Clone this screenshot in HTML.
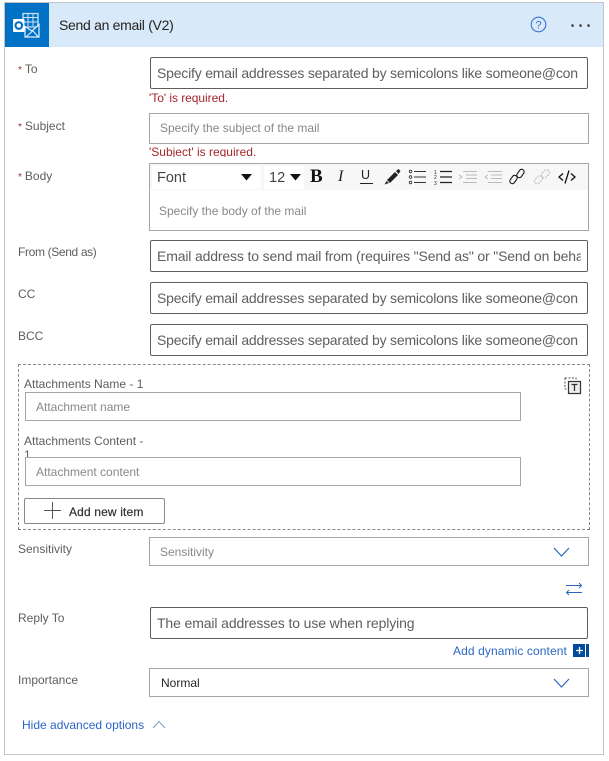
<!DOCTYPE html>
<html><head><meta charset="utf-8">
<style>
html,body{margin:0;padding:0;background:#fff;width:609px;height:761px;overflow:hidden}
body{font-family:"Liberation Sans",sans-serif;position:relative}
.a{position:absolute;box-sizing:border-box}
.t{position:absolute;white-space:nowrap}
.l{font-size:12px;color:#605e5c;line-height:16px}
.r{color:#a4262c;font-size:10px;margin-right:3px}
.d{border:1px solid #605e5c;border-radius:2px;background:#fff;overflow:hidden;white-space:nowrap;color:#605e5c;font-size:14px;line-height:30px;padding-left:6px;padding-right:6px;letter-spacing:-.12px}
.d span{display:block;overflow:hidden}
.d.s{letter-spacing:-.2px}
.g{border:1px solid #a6a6a6;background:#fff;overflow:hidden;white-space:nowrap;color:#8a8886;font-size:12px;line-height:28px;padding-left:10px}
</style></head><body>
<div class="a" style="left:4px;top:2px;width:600px;height:753px;border:1px solid #c4c4c4;background:#fff"></div>
<div class="a" style="left:5px;top:3px;width:598px;height:44px;background:#d8e9f9"></div>
<div class="a" style="left:5px;top:3px;width:44px;height:44px;background:#0072c6"></div>
<svg class="a" style="left:12px;top:12px" width="30" height="27" viewBox="0 0 30 27">
<path d="M11 1.500H26V15H11Z" fill="none" stroke="#cfe4f6" stroke-width="1.300"/><path d="M11 5.500H26M16 1.500V14M21 1.500V14M11 10H26" stroke="#cfe4f6" stroke-width="1"/>
<path d="M13 14.500L20 19L27 12.500V25H13Z" fill="#0072c6" stroke="#e6f1fb" stroke-width="1.200"/><path d="M14 25L20.500 19M26.500 25L21 19" stroke="#e6f1fb" stroke-width="1.100"/>
<rect x="1" y="7" width="11.500" height="13" rx="1" fill="#fff"/><circle cx="6.800" cy="13.500" r="3.300" fill="none" stroke="#0072c6" stroke-width="2.100"/></svg>
<div class="t" style="left:59px;top:16px;font-size:14px;line-height:18px;color:#252423;letter-spacing:-.3px">Send an email (V2)</div>
<svg class="a" style="left:530px;top:16px" width="17" height="17" viewBox="0 0 17 17"><circle cx="8.500" cy="8.500" r="7.300" fill="none" stroke="#3b6fd8" stroke-width="1.100"/><text x="8.500" y="12.500" font-size="11" text-anchor="middle" fill="#3b6fd8" font-family="Liberation Sans">?</text></svg>
<svg class="a" style="left:570px;top:23px" width="22" height="5"><circle cx="2.500" cy="2.500" r="1.300" fill="#333"/><circle cx="10.500" cy="2.500" r="1.300" fill="#333"/><circle cx="18.500" cy="2.500" r="1.300" fill="#333"/></svg>

<div class="t l" style="left:18px;top:61px"><span class="r">*</span>To</div>
<div class="a d s" style="left:150px;top:57px;height:32px;width:438px"><span>Specify email addresses separated by semicolons like someone@con</span></div>
<div class="t" style="left:149px;top:91px;font-size:12px;line-height:15px;color:#a4262c;letter-spacing:-.05px">'To' is required.</div>

<div class="t l" style="left:18px;top:118px"><span class="r">*</span>Subject</div>
<div class="a g" style="left:149px;top:113px;width:440px;height:31px">Specify the subject of the mail</div>
<div class="t" style="left:149px;top:145px;font-size:12px;line-height:15px;color:#a4262c;height:12px;overflow:hidden">'Subject' is required.</div>

<div class="t l" style="left:18px;top:168px"><span class="r">*</span>Body</div>
<div class="a" style="left:149px;top:163px;width:440px;height:68px;border:1px solid #a6a6a6;background:#fff"></div>
<div class="a" style="left:150px;top:164px;width:438px;height:26px;background:#f7f7f7"></div>
<div class="a" style="left:152px;top:166px;width:109px;height:23px;background:#fff"></div>
<div class="a" style="left:264px;top:166px;width:40px;height:23px;background:#fff"></div>
<div class="t" style="left:157px;top:169px;font-size:14.500px;line-height:18px;color:#444">Font</div>
<svg class="a" style="left:241px;top:174px" width="12" height="7"><path d="M0 0H11L5.500 6.500Z" fill="#111"/></svg>
<div class="t" style="left:269px;top:169px;font-size:14.500px;line-height:18px;color:#444">12</div>
<svg class="a" style="left:290px;top:174px" width="12" height="7"><path d="M0 0H11L5.500 6.500Z" fill="#111"/></svg>
<div class="t" style="left:310px;top:166px;font:bold 19px/22px 'Liberation Serif',serif;color:#111">B</div>
<div class="t" style="left:338px;top:168px;font:italic 16px/18px 'Liberation Serif',serif;color:#222">I</div>
<div class="t" style="left:361px;top:167px;font-size:12.500px;line-height:16px;color:#222">U</div>
<div class="a" style="left:360px;top:183px;width:13px;height:1px;background:#222"></div>
<svg class="a" style="left:383px;top:168px" width="20" height="18" viewBox="0 0 20 18"><path d="M4 12L12 4L15 7L7 15Z" fill="#222"/><path d="M13 3L15.500 1L17.500 3L15.500 6Z" fill="#222"/><path d="M1.500 16.500L6 15L3.500 13Z" fill="#222"/></svg>
<svg class="a" style="left:408px;top:168px" width="20" height="18" fill="none" stroke="#333"><circle cx="2.500" cy="3.500" r="1.300" stroke-width=".8"/><circle cx="2.500" cy="9" r="1.300" stroke-width=".8"/><circle cx="2.500" cy="14.500" r="1.300" stroke-width=".8"/><path d="M6 3.500H18M6 9H18M6 14.500H18" stroke-width="1"/></svg>
<svg class="a" style="left:433px;top:168px" width="20" height="18" stroke="#222"><path d="M7 3.500H19M7 9H19M7 14.500H19" stroke-width="1.200"/><text x="1" y="6" font-size="5" fill="#222" stroke="none">1</text><text x="1" y="11" font-size="5" fill="#222" stroke="none">2</text><text x="1" y="17" font-size="5" fill="#222" stroke="none">3</text></svg>
<svg class="a" style="left:458px;top:168px" width="20" height="18" stroke="#bbb"><path d="M5 3.500H19M8 7H19M8 10.500H19M5 14.500H19" stroke-width="1"/><path d="M1 7L4 9L1 11" fill="none" stroke-width="1"/></svg>
<svg class="a" style="left:483px;top:168px" width="20" height="18" stroke="#bbb"><path d="M5 3.500H19M8 7H19M8 10.500H19M5 14.500H19" stroke-width="1"/><path d="M5 7L2 9L5 11" fill="none" stroke-width="1"/></svg>
<svg class="a" style="left:508px;top:168px" width="18" height="18" fill="none" stroke="#222" stroke-width="1.200"><rect x="1" y="9" width="9" height="5" rx="2.500" transform="rotate(-55 5.500 11.500)"/><rect x="8" y="3" width="9" height="5" rx="2.500" transform="rotate(-55 12.500 5.500)"/></svg>
<svg class="a" style="left:533px;top:168px" width="18" height="18" fill="none" stroke="#c4c4c4" stroke-width="1.200" stroke-dasharray="2 1"><rect x="1" y="9" width="9" height="5.500" rx="2.700" transform="rotate(-45 5.500 11.700)"/><rect x="8" y="3" width="9" height="5.500" rx="2.700" transform="rotate(-45 12.500 5.700)"/></svg>
<svg class="a" style="left:556px;top:168px" width="22" height="18" fill="none" stroke="#111" stroke-width="1.300"><path d="M7 5.500L3 9L7 12.500M15 5.500L19 9L15 12.500M13 2.500L9 15.500"/></svg>
<div class="t" style="left:159px;top:203px;font-size:12px;line-height:16px;color:#8a8886">Specify the body of the mail</div>

<div class="t l" style="left:18px;top:244px;letter-spacing:-.35px">From (Send as)</div>
<div class="a d" style="left:150px;top:240px;width:438px;height:32px;letter-spacing:-.15px"><span>Email address to send mail from (requires "Send as" or "Send on behalf</span></div>
<div class="t l" style="left:18px;top:286px">CC</div>
<div class="a d s" style="left:150px;top:282px;width:438px;height:32px"><span>Specify email addresses separated by semicolons like someone@con</span></div>
<div class="t l" style="left:18px;top:328px">BCC</div>
<div class="a d s" style="left:150px;top:324px;width:438px;height:32px"><span>Specify email addresses separated by semicolons like someone@con</span></div>

<div class="a" style="left:18px;top:364px;width:572px;height:166px;border:1px dashed #8a8886"></div>
<div class="t l" style="left:24px;top:376px">Attachments Name - 1</div>
<div class="a g" style="left:25px;top:392px;width:496px;height:29px;line-height:29px">Attachment name</div>
<div class="t l" style="left:24px;top:433px">Attachments Content -</div>
<div class="t l" style="left:24px;top:447px">1</div>
<div class="a g" style="left:25px;top:457px;width:496px;height:29px;line-height:29px">Attachment content</div>
<svg class="a" style="left:564px;top:377px" width="18" height="18"><rect x="1" y="1" width="11" height="11" fill="none" stroke="#555" stroke-dasharray="2 1.500"/><rect x="4.500" y="4.500" width="12" height="12" fill="#eee" stroke="#333" stroke-width="1.200"/><path d="M7.500 7.500H13.500M10.500 7.500V14" stroke="#333" stroke-width="1.300"/></svg>
<div class="a" style="left:24px;top:498px;width:141px;height:26px;border:1px solid #8a8886;border-radius:2px;background:#fff"></div>
<svg class="a" style="left:44px;top:502px" width="17" height="17"><path d="M0 8.500H17M8.500 0V17" stroke="#555" stroke-width="1"/></svg>
<div class="t" style="left:69px;top:504px;font-size:12px;line-height:16px;color:#323130;-webkit-text-stroke:.2px #323130;letter-spacing:.15px">Add new item</div>

<div class="t l" style="left:18px;top:541px">Sensitivity</div>
<div class="a g" style="left:149px;top:537px;width:440px;height:29px;line-height:28px">Sensitivity</div>
<svg class="a" style="left:553px;top:547px" width="18" height="11"><path d="M1 1L8.500 9L16 1" fill="none" stroke="#2b66c4" stroke-width="1.200"/></svg>
<svg class="a" style="left:565px;top:582px" width="18" height="14" fill="none" stroke="#2b66c4" stroke-width="1"><path d="M1 3.500H16.500M14 1L16.500 3.500L14 6M17 10.500H1.500M4 8L1.500 10.500L4 13"/></svg>

<div class="t l" style="left:18px;top:610px">Reply To</div>
<div class="a d" style="left:150px;top:607px;width:438px;height:32px"><span>The email addresses to use when replying</span></div>
<div class="t" style="left:453px;top:643px;font-size:12px;line-height:16px;color:#2b66c4;letter-spacing:.1px">Add dynamic content</div>
<div class="a" style="left:573px;top:644px;width:16px;height:13px;background:#004c9a"></div>
<div class="a" style="left:585px;top:644px;width:1px;height:13px;background:#fff"></div>
<svg class="a" style="left:576px;top:647px" width="7" height="7"><path d="M0 3.500H7M3.500 0V7" stroke="#fff" stroke-width="1.300"/></svg>

<div class="t l" style="left:18px;top:672px">Importance</div>
<div class="a g" style="left:149px;top:668px;width:440px;height:29px;color:#252423;padding-left:11px">Normal</div>
<svg class="a" style="left:553px;top:678px" width="18" height="11"><path d="M1 1L8.500 9L16 1" fill="none" stroke="#2b66c4" stroke-width="1.200"/></svg>
<div class="t" style="left:22px;top:717px;font-size:12px;line-height:16px;color:#2b66c4">Hide advanced options</div>
<svg class="a" style="left:152px;top:720px" width="14" height="9"><path d="M1 8L7 1.500L13 8" fill="none" stroke="#7a9ccc" stroke-width="1"/></svg>
</body></html>
